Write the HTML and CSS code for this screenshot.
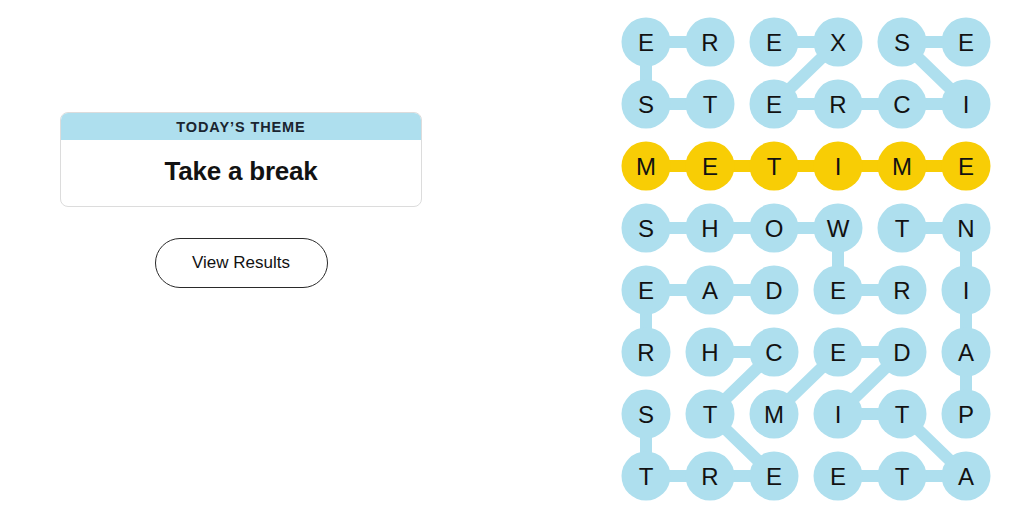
FILE: index.html
```html
<!DOCTYPE html>
<html lang="en">
<head>
<meta charset="utf-8">
<title>Strands</title>
<link rel="stylesheet" href="styles.css">
</head>
<body>
<main class="page">
  <section class="info">
    <div class="theme-card">
      <div class="theme-head">TODAY’S THEME</div>
      <div class="theme-body">Take a break</div>
    </div>
    <button class="results-btn" type="button">View Results</button>
  </section>
  <section class="board-wrap">
    <svg class="board" width="370" height="484" viewBox="0 0 370 484" xmlns="http://www.w3.org/2000/svg">
      <g class="links">
        <!-- REST -->
        <line x1="89" y1="25" x2="25" y2="25"/>
        <line x1="25" y1="25" x2="25" y2="87"/>
        <line x1="25" y1="87" x2="89" y2="87"/>
        <!-- EXERCISE -->
        <line x1="153" y1="25" x2="217" y2="25"/>
        <line x1="217" y1="25" x2="153" y2="87"/>
        <line x1="153" y1="87" x2="345" y2="87"/>
        <line x1="345" y1="87" x2="281" y2="25"/>
        <line x1="281" y1="25" x2="345" y2="25"/>
        <!-- SHOWER -->
        <line x1="25" y1="211" x2="217" y2="211"/>
        <line x1="217" y1="211" x2="217" y2="273"/>
        <line x1="217" y1="273" x2="281" y2="273"/>
        <!-- PAINT -->
        <line x1="281" y1="211" x2="345" y2="211"/>
        <line x1="345" y1="211" x2="345" y2="397"/>
        <!-- READ -->
        <line x1="25" y1="335" x2="25" y2="273"/>
        <line x1="25" y1="273" x2="153" y2="273"/>
        <!-- STRETCH -->
        <line x1="25" y1="397" x2="25" y2="459"/>
        <line x1="25" y1="459" x2="153" y2="459"/>
        <line x1="153" y1="459" x2="89" y2="397"/>
        <line x1="89" y1="397" x2="153" y2="335"/>
        <line x1="153" y1="335" x2="89" y2="335"/>
        <!-- MEDITATE -->
        <line x1="153" y1="397" x2="217" y2="335"/>
        <line x1="217" y1="335" x2="281" y2="335"/>
        <line x1="281" y1="335" x2="217" y2="397"/>
        <line x1="217" y1="397" x2="281" y2="397"/>
        <line x1="281" y1="397" x2="345" y2="459"/>
        <line x1="345" y1="459" x2="217" y2="459"/>
      </g>
      <g class="links spangram">
        <line x1="25" y1="149" x2="345" y2="149"/>
      </g>
      <g class="dots">
        <circle cx="25" cy="25" r="24.5"/><circle cx="89" cy="25" r="24.5"/><circle cx="153" cy="25" r="24.5"/><circle cx="217" cy="25" r="24.5"/><circle cx="281" cy="25" r="24.5"/><circle cx="345" cy="25" r="24.5"/>
        <circle cx="25" cy="87" r="24.5"/><circle cx="89" cy="87" r="24.5"/><circle cx="153" cy="87" r="24.5"/><circle cx="217" cy="87" r="24.5"/><circle cx="281" cy="87" r="24.5"/><circle cx="345" cy="87" r="24.5"/>
        <circle cx="25" cy="211" r="24.5"/><circle cx="89" cy="211" r="24.5"/><circle cx="153" cy="211" r="24.5"/><circle cx="217" cy="211" r="24.5"/><circle cx="281" cy="211" r="24.5"/><circle cx="345" cy="211" r="24.5"/>
        <circle cx="25" cy="273" r="24.5"/><circle cx="89" cy="273" r="24.5"/><circle cx="153" cy="273" r="24.5"/><circle cx="217" cy="273" r="24.5"/><circle cx="281" cy="273" r="24.5"/><circle cx="345" cy="273" r="24.5"/>
        <circle cx="25" cy="335" r="24.5"/><circle cx="89" cy="335" r="24.5"/><circle cx="153" cy="335" r="24.5"/><circle cx="217" cy="335" r="24.5"/><circle cx="281" cy="335" r="24.5"/><circle cx="345" cy="335" r="24.5"/>
        <circle cx="25" cy="397" r="24.5"/><circle cx="89" cy="397" r="24.5"/><circle cx="153" cy="397" r="24.5"/><circle cx="217" cy="397" r="24.5"/><circle cx="281" cy="397" r="24.5"/><circle cx="345" cy="397" r="24.5"/>
        <circle cx="25" cy="459" r="24.5"/><circle cx="89" cy="459" r="24.5"/><circle cx="153" cy="459" r="24.5"/><circle cx="217" cy="459" r="24.5"/><circle cx="281" cy="459" r="24.5"/><circle cx="345" cy="459" r="24.5"/>
      </g>
      <g class="dots spangram">
        <circle cx="25" cy="149" r="24.5"/><circle cx="89" cy="149" r="24.5"/><circle cx="153" cy="149" r="24.5"/><circle cx="217" cy="149" r="24.5"/><circle cx="281" cy="149" r="24.5"/><circle cx="345" cy="149" r="24.5"/>
      </g>
      <g class="letters">
        <text x="25" y="34">E</text><text x="89" y="34">R</text><text x="153" y="34">E</text><text x="217" y="34">X</text><text x="281" y="34">S</text><text x="345" y="34">E</text>
        <text x="25" y="96">S</text><text x="89" y="96">T</text><text x="153" y="96">E</text><text x="217" y="96">R</text><text x="281" y="96">C</text><text x="345" y="96">I</text>
        <text x="25" y="158">M</text><text x="89" y="158">E</text><text x="153" y="158">T</text><text x="217" y="158">I</text><text x="281" y="158">M</text><text x="345" y="158">E</text>
        <text x="25" y="220">S</text><text x="89" y="220">H</text><text x="153" y="220">O</text><text x="217" y="220">W</text><text x="281" y="220">T</text><text x="345" y="220">N</text>
        <text x="25" y="282">E</text><text x="89" y="282">A</text><text x="153" y="282">D</text><text x="217" y="282">E</text><text x="281" y="282">R</text><text x="345" y="282">I</text>
        <text x="25" y="344">R</text><text x="89" y="344">H</text><text x="153" y="344">C</text><text x="217" y="344">E</text><text x="281" y="344">D</text><text x="345" y="344">A</text>
        <text x="25" y="406">S</text><text x="89" y="406">T</text><text x="153" y="406">M</text><text x="217" y="406">I</text><text x="281" y="406">T</text><text x="345" y="406">P</text>
        <text x="25" y="468">T</text><text x="89" y="468">R</text><text x="153" y="468">E</text><text x="217" y="468">E</text><text x="281" y="468">T</text><text x="345" y="468">A</text>
      </g>
    </svg>
  </section>
</main>
</body>
</html>
```
FILE: styles.css
```css
* { box-sizing: border-box; }

html, body {
  margin: 0;
  padding: 0;
  background: #ffffff;
}

body {
  font-family: "Liberation Sans", Arial, sans-serif;
  color: #121212;
}

.page {
  display: flex;
  align-items: flex-start;
  width: 1024px;
  height: 530px;
}

.info {
  display: flex;
  flex-direction: column;
  align-items: center;
  width: 362px;
  margin-left: 60px;
  padding-top: 112px;
  gap: 31px;
}

.theme-card {
  width: 362px;
  border: 1px solid #dcdcdc;
  border-radius: 8px;
  overflow: hidden;
  background: #fff;
}

.theme-head {
  height: 27px;
  background: #aedfee;
  display: flex;
  align-items: center;
  justify-content: center;
  font-size: 14.5px;
  font-weight: 700;
  letter-spacing: 0.9px;
  color: #1a2530;
}

.theme-body {
  height: 66px;
  display: flex;
  align-items: center;
  justify-content: center;
  padding-bottom: 4px;
  font-size: 26px;
  font-weight: 700;
  letter-spacing: -0.2px;
  color: #121212;
}

.results-btn {
  width: 173px;
  height: 50px;
  border: 1px solid #2a2a2a;
  border-radius: 25px;
  background: #fff;
  font-family: "Liberation Sans", Arial, sans-serif;
  font-size: 17px;
  color: #121212;
  padding: 0;
  cursor: pointer;
}

.board-wrap {
  margin-left: 199px;
  padding-top: 17px;
}

.board {
  display: block;
}

.links line {
  stroke: #aedfee;
  stroke-width: 12;
  stroke-linecap: round;
}

.links.spangram line {
  stroke: #f8cd05;
}

.dots circle {
  fill: #aedfee;
}

.dots.spangram circle {
  fill: #f8cd05;
}

.letters text {
  font-family: "Liberation Sans", Arial, sans-serif;
  font-size: 24px;
  fill: #121212;
  text-anchor: middle;
}
```
